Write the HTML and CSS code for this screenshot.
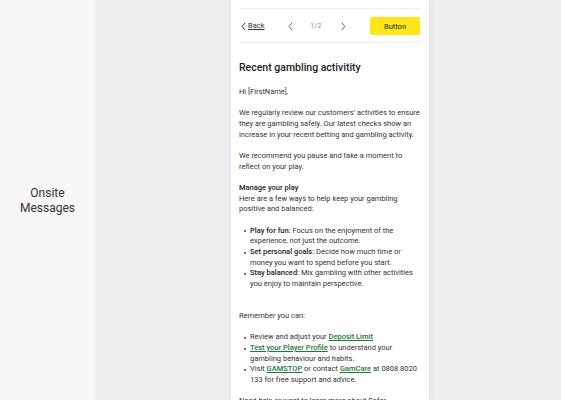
FILE: index.html
```html
<!DOCTYPE html>
<html>
<head>
<meta charset="utf-8">
<link rel="stylesheet" href="styles.css">
</head>
<body>
<div class="page">
  <aside class="side">
    <div class="side-label">Onsite<br>Messages</div>
  </aside>
  <main class="stage">
    <div class="card">
      <nav class="nav">
        <a class="back" href="#">
          <svg class="chev" width="5" height="9" viewBox="0 0 5 9"><path d="M4.2 0.8 L1 4.5 L4.2 8.2" fill="none" stroke="#333" stroke-width="1"/></svg>
          <span>Back</span>
        </a>
        <div class="pager">
          <svg class="chev" width="5" height="9" viewBox="0 0 5 9"><path d="M4.2 0.8 L1 4.5 L4.2 8.2" fill="none" stroke="#666" stroke-width="1"/></svg>
          <span class="count">1/2</span>
          <svg class="chev" width="5" height="9" viewBox="0 0 5 9"><path d="M0.8 0.8 L4 4.5 L0.8 8.2" fill="none" stroke="#666" stroke-width="1"/></svg>
        </div>
        <button class="btn">Button</button>
      </nav>
      <h1 class="title">Recent gambling activitity</h1>
      <p>Hi [FirstName],</p>
      <p>We regularly review our customers’ activities to ensure they are gambling safely. Our latest checks show an increase in your recent betting and gambling activity.</p>
      <p>We recommend you pause and take a moment to reflect on your play.</p>
      <p><strong>Manage your play</strong><br>Here are a few ways to help keep your gambling positive and balanced:</p>
      <ul class="list list-wide">
        <li><strong>Play for fun:</strong> Focus on the enjoyment of the experience, not just the outcome.</li>
        <li><strong>Set personal goals:</strong> Decide how much time or money you want to spend before you start.</li>
        <li><strong>Stay balanced:</strong> Mix gambling with other activities you enjoy to maintain perspective.</li>
      </ul>
      <p>Remember you can:</p>
      <ul class="list">
        <li>Review and adjust your <a class="link" href="#">Deposit Limit</a></li>
        <li><a class="link" href="#">Test your Player Profile</a> to understand your gambling behaviour and habits.</li>
        <li>Visit <a class="link" href="#">GAMSTOP</a> or contact <a class="link" href="#">GamCare</a> at 0808 8020 133 for free support and advice.</li>
      </ul>
      <p>Need help or want to learn more about Safer Gambling? Visit our Safer Gambling page.</p>
    </div>
  </main>
</div>
</body>
</html>
```
FILE: styles.css
```css
* { box-sizing: border-box; }
html, body { margin: 0; padding: 0; height: 100%; overflow: hidden; }
body {
  font-family: Roboto, "Liberation Sans", Arial, sans-serif;
  color: #333;
  background: #eeeeee;
}
.page {
  display: flex;
  width: 561px;
  height: 400px;
}
.side {
  width: 95px;
  flex: none;
  background: #f7f7f7;
  display: flex;
  align-items: center;
  justify-content: center;
}
.side-label {
  font-size: 12px;
  line-height: 15px;
  text-align: center;
  color: #333;
  margin-top: 1px;
}
.stage {
  flex: 1;
  display: flex;
  justify-content: center;
}
.card {
  width: 198px;
  margin-left: 4px;
  background: #fff;
  box-shadow: 0 0 6px rgba(0,0,0,0.08);
  padding: 8px 9px 0 8px;
  height: 400px;
  overflow: hidden;
}
.nav {
  display: flex;
  align-items: center;
  border-top: 1px solid #eeeeee;
  border-bottom: 1px solid #eeeeee;
  padding: 8px 0 7px;
  font-size: 7.5px;
  line-height: 10px;
}
.back {
  display: flex;
  align-items: center;
  gap: 2px;
  color: #333;
  text-decoration: underline;
  width: 49px;
  padding-left: 2px;
}
.chev { display: block; }
.pager {
  display: flex;
  align-items: center;
  color: #888;
}
.pager .count {
  margin: 0 19px 0 17px;
  color: #999;
}
.btn {
  margin-left: auto;
  width: 50px;
  height: 18px;
  border: none;
  border-radius: 2px;
  background: #ffe519;
  font-family: inherit;
  font-size: 7.5px;
  color: #222;
  padding: 0;
}
.title {
  font-size: 10.5px;
  line-height: 16px;
  font-weight: 500;
  color: #222;
  margin: 17px 0 11px;
}
p {
  font-size: 7.5px;
  line-height: 10.67px;
  margin: 0 0 10.67px;
}
strong { font-weight: 500; color: #222; }
.list {
  font-size: 7.5px;
  line-height: 10.67px;
  margin: 0 0 10.67px;
  padding: 0 0 0 11px;
  list-style: none;
}
.list li { position: relative; }
.list li::before {
  content: "";
  position: absolute;
  left: -6px;
  top: 4.5px;
  width: 2px;
  height: 2px;
  border-radius: 50%;
  background: #444;
}
.list-wide { margin-bottom: 21.33px; }
.link {
  color: #1d7a3b;
  font-weight: 500;
  text-decoration: underline;
}
```
